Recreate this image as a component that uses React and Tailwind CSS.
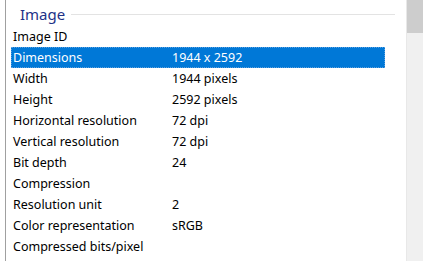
const rows = [
    ["Image ID", ""],
    ["Dimensions", "1944 x 2592"],
    ["Width", "1944 pixels"],
    ["Height", "2592 pixels"],
    ["Horizontal resolution", "72 dpi"],
    ["Vertical resolution", "72 dpi"],
    ["Bit depth", "24"],
    ["Compression", ""],
    ["Resolution unit", "2"],
    ["Color representation", "sRGB"],
    ["Compressed bits/pixel", ""],
];

export default function App() {
    return (
        <div className="w-[423px] h-[261px] bg-white flex overflow-hidden text-[12.5px] text-black font-['Noto_Sans',sans-serif]">
            <div className="flex-1 flex">
                <div className="w-[5px]" />
                <div className="w-px bg-[#a0a0a0]" />
                <div className="flex-1 flex flex-col pt-[4px]">
                    {/* Group header */}
                    <div className="flex items-center h-[22px] pl-[14px] pr-[11px]">
                        <span className="text-[15px] text-[#1e3287] leading-none -mt-[1px]">Image</span>
                        <div className="flex-1 h-px bg-[#e3e3e3] ml-[6px] -mt-[2px]" />
                    </div>
                    {rows.map(([label, value], i) => (
                        <div
                            key={label}
                            className={`flex items-center h-[21px] ml-[5px] mr-[21px] pl-[2px] pt-[1px] ${
                                i === 1
                                    ? "bg-[#0078d7] text-white outline-1 outline-dotted outline-[#5aa0e0] -outline-offset-1"
                                    : ""
                            }`}
                        >
                            <span className="w-[159px] shrink-0">{label}</span>
                            <span>{value}</span>
                        </div>
                    ))}
                </div>
            </div>
            {/* Scrollbar */}
            <div className="w-[17px] bg-[#f0f0f0] border-l border-[#e8e8e8]">
                <div className="h-[33px] bg-[#cdcdcd]" />
            </div>
        </div>
    );
}
